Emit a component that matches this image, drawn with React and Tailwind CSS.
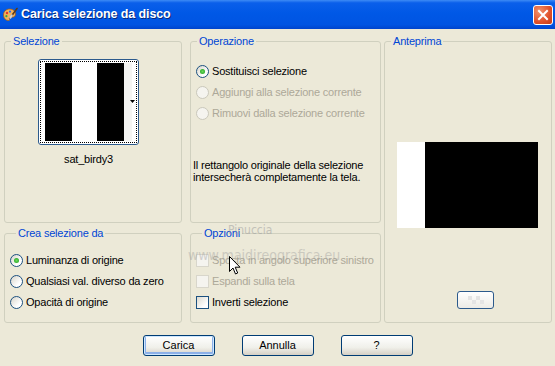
import React from 'react';

const Legend = ({ children }) => (
    <legend className="ml-[6px] px-[2px] text-[11px] leading-[13px] tracking-[-0.2px] text-[#0046D5]">{children}</legend>
);

const Radio = ({ checked, disabled }) => (
    <span
        className={`flex h-[13px] w-[13px] shrink-0 items-center justify-center rounded-full border ${
            disabled
                ? 'border-[#CAC8BB] bg-[#F5F4EF]'
                : 'border-[#1C5180] bg-[linear-gradient(135deg,#D8D5CA,#FFFFFF_70%)]'
        }`}
    >
        {checked && <span className="h-[5px] w-[5px] rounded-full bg-[radial-gradient(circle,#6BDB5C,#1A9A1A)]" />}
    </span>
);

const Check = ({ disabled }) => (
    <span
        className={`h-[13px] w-[13px] shrink-0 border ${
            disabled
                ? 'border-[#D8D6CB] bg-[#F5F4EF]'
                : 'border-[#1C5180] bg-[linear-gradient(135deg,#DCDAD0,#FFFFFF_75%)]'
        }`}
    />
);

const Option = ({ children, disabled, control }) => (
    <div className="flex h-[21px] items-center gap-[3px] whitespace-nowrap">
        {control}
        <span className={`text-[11px] tracking-[-0.2px] ${disabled ? 'text-[#ACA899]' : 'text-black'}`}>{children}</span>
    </div>
);

const XPButton = ({ children, isDefault }) => (
    <button
        className={`h-[21px] w-[72px] rounded-[3px] border border-[#003C74] bg-[linear-gradient(to_bottom,#FFFFFF,#F0F0EA_60%,#D6D0C5)] text-[11px] text-black ${
            isDefault ? 'shadow-[inset_0_0_0_1px_#CEE7FF,inset_0_-1px_0_2px_#8CB0E8]' : ''
        }`}
    >
        {children}
    </button>
);

const Palette = () => (
    <svg width="16" height="16" viewBox="0 0 16 16">
        <path d="M8 2C4 2 1.5 4.5 1.5 8c0 3 2 5.5 5 5.5 1.2 0 1.5-.8 1-1.6-.5-.8 0-1.6 1-1.6h1.6c2 0 3.4-1.3 3.4-3.3C13.5 4 11 2 8 2z" fill="#F2B25C" stroke="#9A5A1C" strokeWidth="0.8" />
        <circle cx="5" cy="6" r="1.2" fill="#E53A2A" />
        <circle cx="8" cy="4.6" r="1.1" fill="#2E6BE6" />
        <circle cx="4.4" cy="9.2" r="1.1" fill="#3AAA3A" />
        <path d="M15 1.5L9.5 9" stroke="#5A3A1A" strokeWidth="1.6" strokeLinecap="round" />
        <path d="M9.8 8.4l-1.4 2.2" stroke="#D0D0D0" strokeWidth="2" strokeLinecap="round" />
    </svg>
);

const App = () => {
    return (
        <div className="relative h-[366px] w-[555px] overflow-hidden bg-[#ECE9D8] font-['Liberation_Sans',Arial,sans-serif]">
            {/* Title bar */}
            <div className="flex h-[29px] items-center bg-[linear-gradient(to_bottom,#3D8BF5_0%,#0A5FEA_10%,#0058E6_45%,#0054E2_85%,#0044CC_100%)] pl-[2px] pr-[2px]">
                <Palette />
                <span className="ml-[3px] text-[12.5px] font-bold tracking-[-0.1px] text-white [text-shadow:1px_1px_0_#0A2A7A]">
                    Carica selezione da disco
                </span>
                <div className="flex-1" />
                <div className="flex h-[20px] w-[20px] items-center justify-center rounded-[3px] border border-white bg-[radial-gradient(circle_at_30%_30%,#F3936E,#E0502A_60%,#C23A16)]">
                    <svg width="12" height="12" viewBox="0 0 12 12">
                        <path d="M2 2l8 8M10 2l-8 8" stroke="white" strokeWidth="2" strokeLinecap="square" />
                    </svg>
                </div>
            </div>

            {/* Body */}
            <div className="flex pl-[4px] pt-[6px]">
                <div className="flex w-[178px] flex-col gap-[4px]">
                    <fieldset className="h-[188px] rounded-[3px] border border-[#D0D0BF]">
                        <Legend>Selezione</Legend>
                        <div className="ml-[33px] mt-[11px] flex w-[101px] flex-col items-center">
                            <div className="h-[86px] w-[101px] rounded-[3px] border border-[#2C5A8C] bg-white p-[1px]">
                                <div className="relative flex h-full border border-dotted border-black py-[1px] pl-[4px]">
                                    <div className="w-[27px] bg-black" />
                                    <div className="w-[25px] bg-white" />
                                    <div className="w-[27px] bg-black" />
                                    <div className="w-[8px] bg-[#F4F4F2]" />
                                    <svg className="absolute right-[1px] top-[38px]" width="5" height="3" viewBox="0 0 5 3">
                                        <path d="M0 0h5L2.5 3z" fill="black" />
                                    </svg>
                                </div>
                            </div>
                            <div className="mt-[8px] text-[11px] leading-[13px] tracking-[-0.2px] text-black">sat_birdy3</div>
                        </div>
                    </fieldset>
                    <fieldset className="h-[96px] rounded-[3px] border border-[#D0D0BF] pl-[5px]">
                        <Legend>Crea selezione da</Legend>
                        <div className="mt-[10px] flex flex-col">
                            <Option control={<Radio checked />}>Luminanza di origine</Option>
                            <Option control={<Radio />}>Qualsiasi val. diverso da zero</Option>
                            <Option control={<Radio />}>Opacità di origine</Option>
                        </div>
                    </fieldset>
                </div>

                <div className="ml-[8px] flex w-[191px] flex-col gap-[4px]">
                    <fieldset className="h-[188px] rounded-[3px] border border-[#D0D0BF]">
                        <Legend>Operazione</Legend>
                        <div className="mt-[13px] flex flex-col pl-[5px]">
                            <Option control={<Radio checked />}>Sostituisci selezione</Option>
                            <Option disabled control={<Radio disabled />}>Aggiungi alla selezione corrente</Option>
                            <Option disabled control={<Radio disabled />}>Rimuovi dalla selezione corrente</Option>
                        </div>
                        <p className="mt-[35px] whitespace-nowrap pl-[2px] text-[11px] leading-[12px] tracking-[-0.2px] text-black">
                            Il rettangolo originale della selezione
                            <br />
                            intersecherà completamente la tela.
                        </p>
                    </fieldset>
                    <fieldset className="h-[96px] rounded-[3px] border border-[#D0D0BF] pl-[5px]">
                        <Legend>Opzioni</Legend>
                        <div className="mt-[10px] flex flex-col">
                            <Option disabled control={<Check disabled />}>Sposta in angolo superiore sinistro</Option>
                            <Option disabled control={<Check disabled />}>Espandi sulla tela</Option>
                            <Option control={<Check />}>Inverti selezione</Option>
                        </div>
                    </fieldset>
                </div>

                <fieldset className="ml-[3px] h-[288px] w-[168px] rounded-[3px] border border-[#D0D0BF]">
                    <Legend>Anteprima</Legend>
                    <div className="ml-[12px] mt-[94px] flex h-[86px] w-[141px]">
                        <div className="w-[28px] bg-white" />
                        <div className="flex-1 bg-black" />
                    </div>
                    <div className="ml-[72px] mt-[63px] flex h-[18px] w-[37px] items-center justify-center rounded-[3px] border border-[#2C5A8C] bg-[linear-gradient(to_bottom,#FFFFFF,#ECEBE6)]">
                        <svg width="16" height="8" viewBox="0 0 16 8">
                            <rect x="0" y="0" width="4" height="4" fill="#E4E4E4" />
                            <rect x="8" y="0" width="4" height="4" fill="#E4E4E4" />
                            <rect x="4" y="4" width="4" height="4" fill="#E4E4E4" />
                            <rect x="12" y="4" width="4" height="4" fill="#E4E4E4" />
                        </svg>
                    </div>
                </fieldset>
            </div>

            {/* Buttons */}
            <div className="mt-[12px] flex justify-center gap-[27px]">
                <XPButton isDefault>Carica</XPButton>
                <XPButton>Annulla</XPButton>
                <XPButton>?</XPButton>
            </div>

            {/* Watermark + cursor */}
            <div className="pointer-events-none absolute left-[228px] top-[223px] font-['DejaVu_Sans_Condensed',sans-serif] text-[12px] leading-[14px] text-[#9A9A9A] opacity-50">
                Pinuccia
            </div>
            <div className="pointer-events-none absolute left-[188px] top-[247px] font-['DejaVu_Sans_Condensed',sans-serif] text-[14px] leading-[16px] text-[#9A9A9A] opacity-40">
                www.maidireografica.eu
            </div>
            <svg className="pointer-events-none absolute left-[229px] top-[256px]" width="13" height="19" viewBox="0 0 13 19">
                <path d="M0.5 0.5v15l3.5-3.5 2.5 6 2.2-1-2.5-5.8H11z" fill="white" stroke="black" strokeWidth="1" />
            </svg>
        </div>
    );
};

export default App;
